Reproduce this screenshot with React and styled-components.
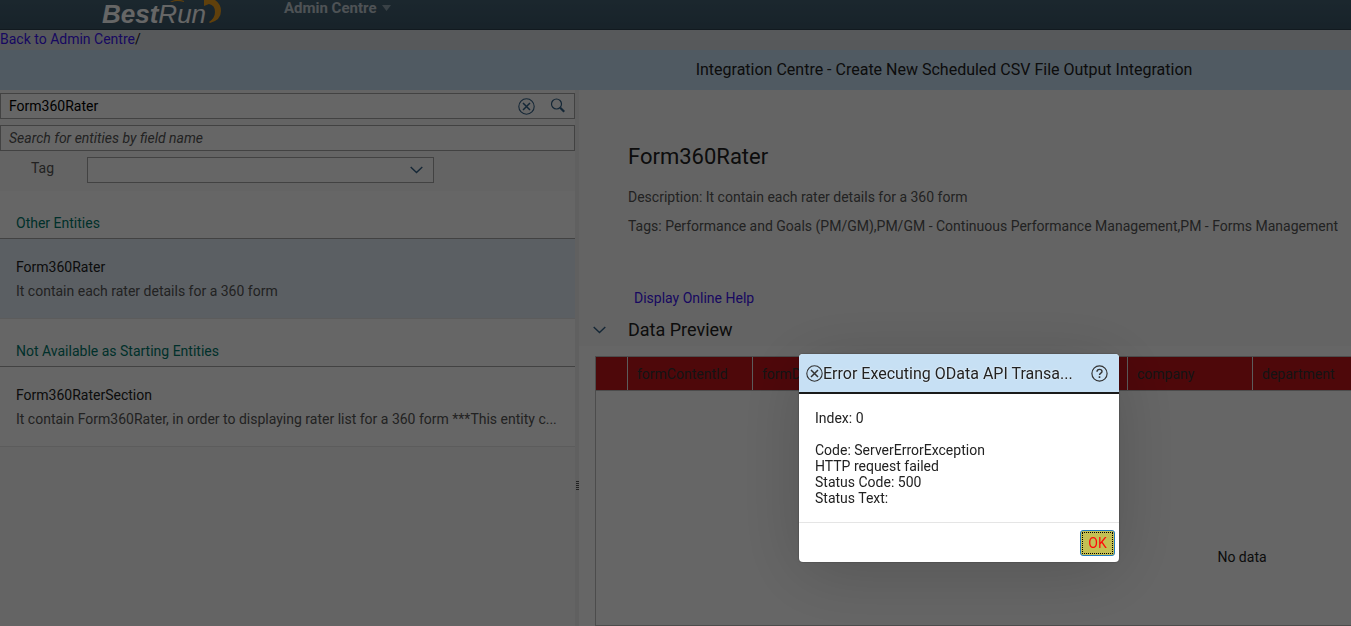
import React from 'react';
import styled, { createGlobalStyle } from 'styled-components';

const GlobalStyle = createGlobalStyle`
  * {
    box-sizing: border-box;
  }
  body {
    margin: 0;
    overflow: hidden;
    font-family: Roboto, "Liberation Sans", sans-serif;
    font-size: 14px;
    line-height: 16px;
    color: #222;
  }
  h1, h2, h3, p, ul {
    margin: 0;
    padding: 0;
    font-size: 14px;
    font-weight: normal;
  }
  a {
    color: #3c14f0;
    text-decoration: none;
  }
  button, input, select {
    font: inherit;
  }
`;

const Viewport = styled.div`
  height: 100vh;
  overflow: hidden;
`;

const Page = styled.div`
  display: flex;
  flex-direction: column;
  min-width: 118rem;
  height: 100%;
  background-color: #fff;
`;

const TopBar = styled.header`
  display: flex;
  align-items: center;
  height: 30px;
  padding-left: 102px;
  gap: 62px;
  background: linear-gradient(#456274, #3c5768);
  border-bottom: 1px solid #2d4250;
  overflow: hidden;
`;

const Logo = styled.div`
  display: flex;
  align-items: flex-start;
  width: 120px;
  height: 30px;
  position: relative;
  font-family: "Liberation Sans", Arial, sans-serif;
  font-size: 26px;
  font-style: italic;
  line-height: 28px;
  color: #fff;
  svg {
    position: absolute;
    top: 0;
    left: 0;
  }
`;

const MenuButton = styled.button`
  display: flex;
  align-items: center;
  gap: 6px;
  height: 16px;
  margin-bottom: 14px;
  padding: 0;
  border: none;
  background: none;
  color: #c3ced5;
  font-size: 15px;
  font-weight: bold;
`;

const Breadcrumb = styled.nav`
  height: 20px;
  line-height: 18px;
  background-color: #d9dfe3;
`;

const TitleBar = styled.h1`
  height: 40px;
  line-height: 40px;
  font-size: 16px;
  text-align: center;
  background-color: #c7e0f4;
`;

const Content = styled.main`
  display: flex;
  flex: 1;
  min-height: 0;
`;

const Sidebar = styled.section`
  flex: 0 0 575px;
  background-color: #fafafa;
`;

const Splitter = styled.div`
  display: flex;
  align-items: flex-start;
  justify-content: flex-end;
  width: 4px;
  padding-top: 391px;
  background-color: #efefef;
`;

const Filters = styled.form`
  display: flex;
  flex-direction: column;
  gap: 6px;
  height: 101px;
  padding-top: 3px;
`;

const Field = styled.div`
  display: flex;
  align-items: center;
  height: 26px;
  padding: 0 8px;
  gap: 15px;
  border: 1px solid #a6a6a6;
  background-color: #fff;
`;

const TextInput = styled.input`
  flex: 1;
  min-width: 0;
  padding: 0;
  border: none;
  outline: none;
  background: none;
  color: #000;
  &::placeholder {
    color: #555;
    font-style: italic;
    opacity: 1;
  }
`;

const IconButton = styled.button`
  display: flex;
  padding: 0;
  border: none;
  background: none;
  color: ${props => props.$color || '#346187'};
`;

const TagRow = styled.div`
  display: flex;
  align-items: center;
  padding-left: 31px;
  color: #555;
  label {
    width: 56px;
    padding-bottom: 4px;
  }
`;

const SelectBox = styled.div`
  display: grid;
  width: 347px;
  color: #346187;
  > * {
    grid-area: 1 / 1;
  }
  svg {
    align-self: center;
    justify-self: end;
    margin-right: 11px;
    pointer-events: none;
  }
`;

const Select = styled.select`
  appearance: none;
  height: 26px;
  border: 1px solid #a6a6a6;
  border-radius: 0;
  background-color: #fff;
`;

const GroupHeader = styled.h2`
  height: 48px;
  padding: 24px 16px 0;
  border-bottom: 1px solid #a6a6a6;
  background-color: #fff;
  color: #00796b;
`;

const Entity = styled.li`
  display: flex;
  flex-direction: column;
  gap: 8px;
  height: 80px;
  padding: 20px 16px 0;
  list-style: none;
  border-bottom: 1px solid #e5e5e5;
  background-color: ${props => (props.$selected ? '#e3edf8' : '#fff')};
`;

const Muted = styled.p`
  color: #555;
  white-space: nowrap;
`;

const Detail = styled.section`
  display: flex;
  flex-direction: column;
  flex: 1;
  min-width: 0;
`;

const DetailHeader = styled.div`
  flex: 0 0 256px;
  padding: 54px 49px 0;
  background-color: #fafafa;
`;

const DetailTitle = styled.h2`
  margin-bottom: 19px;
  font-size: 22px;
  line-height: 26px;
`;

const DetailText = styled(Muted)`
  height: 29px;
`;

const HelpLink = styled.a`
  display: block;
  margin: 43px 6px 0;
`;

const PreviewTitle = styled.div`
  display: flex;
  align-items: center;
  gap: 22px;
  margin: 12px 0 0 -35px;
  h3 {
    font-size: 18px;
    line-height: 24px;
  }
`;

const Chevron = styled.svg`
  width: 13px;
  height: 8px;
  fill: none;
  stroke: #346187;
  stroke-width: 1.4;
`;

const Preview = styled.div`
  flex: 1;
  min-height: 0;
  margin: 10px 0 0 16px;
  border: 1px solid #bfbfbf;
  border-right: none;
  overflow: hidden;
`;

const Table = styled.table`
  width: 100%;
  table-layout: fixed;
  border-collapse: separate;
  border-spacing: 0;
  th {
    width: 125px;
    height: 33px;
    padding: 0 9px;
    border-right: 1px solid #e5e5e5;
    background-color: #c4141b;
    color: #333;
    font-weight: normal;
    text-align: left;
  }
  th:first-child {
    width: 32px;
  }
  th:last-child {
    width: auto;
    border-right: none;
  }
  td {
    height: 332px;
    padding: 0;
    border-top: 1px solid #bfbfbf;
    text-align: center;
  }
`;

const Overlay = styled.div`
  position: fixed;
  inset: 0;
  background-color: rgba(0, 0, 0, 0.6);
`;

const Dialog = styled.section`
  position: fixed;
  top: 354px;
  left: 799px;
  width: 320px;
  border-radius: 4px;
  overflow: hidden;
  background-color: #fff;
  box-shadow: 0 0 2px rgba(0, 0, 0, 0.4), 0 10px 70px rgba(0, 0, 0, 0.18);
`;

const DialogHeader = styled.header`
  display: flex;
  align-items: center;
  height: 40px;
  padding: 1px 11px 0 7px;
  border-bottom: 2px solid #1a1a1a;
  background-color: #c7e0f4;
  h2 {
    flex: 1;
    font-size: 16px;
    line-height: 20px;
    white-space: nowrap;
    text-shadow: 0 0 2px #fff;
  }
`;

const DialogBody = styled.p`
  padding: 16px;
  white-space: pre-line;
`;

const DialogFooter = styled.footer`
  display: flex;
  justify-content: flex-end;
  height: 40px;
  padding: 7px 4px;
  border-top: 1px solid #e5e5e5;
`;

const OkButton = styled.button`
  width: 35px;
  height: 26px;
  padding: 0;
  border: 1px solid #1f7cc0;
  border-radius: 3px;
  outline: 1px dotted #000;
  outline-offset: -3px;
  background-color: #c4c053;
  color: #ff0a0a;
`;

const ClearIcon = () => (
  <svg width="17" height="17" viewBox="0 0 17 17" fill="none" stroke="currentColor">
    <circle cx="8.5" cy="8.5" r="7.7" strokeWidth="1.1" />
    <path d="M5 5l7 7M12 5l-7 7" strokeWidth="1.5" />
  </svg>
);

const SearchIcon = () => (
  <svg width="16" height="16" viewBox="0 0 16 16" fill="none" stroke="currentColor">
    <circle cx="6.500" cy="6" r="5" strokeWidth="1.2" />
    <path d="M10.2 9.700l4 4" strokeWidth="2.2" />
  </svg>
);

const HelpIcon = () => (
  <svg width="17" height="17" viewBox="0 0 17 17" fill="none" stroke="currentColor">
    <circle cx="8.5" cy="8.5" r="7.6" strokeWidth="1.2" />
    <path d="M6 6.7c0-1.5 1-2.3 2.5-2.3s2.5.8 2.5 2.1c0 1.7-2.5 1.7-2.5 3.6" strokeWidth="1.4" />
    <path d="M8.5 11.3v1.6" strokeWidth="1.6" />
  </svg>
);

const ArrowDown = () => (
  <Chevron viewBox="0 0 13 8" aria-hidden="true">
    <path d="M.7 1l5.8 5.6L12.3 1" />
  </Chevron>
);

const GripIcon = () => (
  <svg width="3" height="10" viewBox="0 0 3 10" stroke="#555">
    <path d="M0 .5h3M0 2.5h3M0 4.5h3M0 6.5h3M0 8.5h3" />
  </svg>
);

const groups = [
  {
    title: 'Other Entities',
    entities: [
      { name: 'Form360Rater', text: 'It contain each rater details for a 360 form', selected: true },
    ],
  },
  {
    title: 'Not Available as Starting Entities',
    entities: [
      {
        name: 'Form360RaterSection',
        text: 'It contain Form360Rater, in order to displaying rater list for a 360 form ***This entity c...',
      },
    ],
  },
];

const columns = ['', 'formContentId', 'formDataId', '', '', 'company', 'department'];

const errorText = `Index: 0

Code: ServerErrorException
HTTP request failed
Status Code: 500
Status Text:`;

const EntitySearch = () => (
  <Filters>
    <Field>
      <TextInput aria-label="Entity name" defaultValue="Form360Rater" />
      <IconButton type="button" aria-label="Clear"><ClearIcon /></IconButton>
      <IconButton type="button" aria-label="Search"><SearchIcon /></IconButton>
    </Field>
    <Field>
      <TextInput aria-label="Field name" placeholder="Search for entities by field name" />
    </Field>
    <TagRow>
      <label htmlFor="tag">Tag</label>
      <SelectBox>
        <Select id="tag" />
        <ArrowDown />
      </SelectBox>
    </TagRow>
  </Filters>
);

const ErrorDialog = () => (
  <Dialog role="dialog" aria-labelledby="error-title">
    <DialogHeader>
      <IconButton type="button" aria-label="Close" $color="#333"><ClearIcon /></IconButton>
      <h2 id="error-title">Error Executing OData API Transa...</h2>
      <IconButton type="button" aria-label="Help" $color="#333"><HelpIcon /></IconButton>
    </DialogHeader>
    <DialogBody>{errorText}</DialogBody>
    <DialogFooter>
      <OkButton type="button">OK</OkButton>
    </DialogFooter>
  </Dialog>
);

const App = () => (
  <Viewport>
    <GlobalStyle />
    <Page>
      <TopBar>
        <Logo>
          <b>Best</b>
          <span>Run</span>
          <svg width="120" height="30" viewBox="0 0 120 30" fill="#f0a01e" aria-hidden="true">
            <path d="M68 2q7-4 14-1l0 1q-7-2-12 0z" />
            <path d="M102 0h11q6 4 6 11 0 9-11 12l-1-1q6-4 6-10 0-7-6-8l-5 2z" />
          </svg>
        </Logo>
        <MenuButton type="button">
          Admin Centre
          <svg width="9" height="6" viewBox="0 0 9 6" fill="#8fa3b0"><path d="M0 0h9L4.500 6z" /></svg>
        </MenuButton>
      </TopBar>
      <Breadcrumb><a href="#admin">Back to Admin Centre</a>/</Breadcrumb>
      <TitleBar>Integration Centre - Create New Scheduled CSV File Output Integration</TitleBar>
      <Content>
        <Sidebar>
          <EntitySearch />
          {
            groups.map(group => (
              <div key={group.title}>
                <GroupHeader>{group.title}</GroupHeader>
                <ul>
                  {group.entities.map(entity => (
                    <Entity key={entity.name} $selected={entity.selected}>
                      <h3>{entity.name}</h3>
                      <Muted>{entity.text}</Muted>
                    </Entity>
                  ))}
                </ul>
              </div>
            ))
          }
        </Sidebar>
        <Splitter><GripIcon /></Splitter>
        <Detail>
          <DetailHeader>
            <DetailTitle>Form360Rater</DetailTitle>
            <DetailText>Description: It contain each rater details for a 360 form</DetailText>
            <DetailText>
              Tags: Performance and Goals (PM/GM),PM/GM - Continuous Performance Management,PM - Forms Management
            </DetailText>
            <HelpLink href="#help">Display Online Help</HelpLink>
            <PreviewTitle>
              <ArrowDown />
              <h3>Data Preview</h3>
            </PreviewTitle>
          </DetailHeader>
          <Preview>
            <Table>
              <thead>
                <tr>
                  {columns.map((name, i) => <th key={i}>{name}</th>)}
                </tr>
              </thead>
              <tbody>
                <tr><td colSpan={columns.length}>No data</td></tr>
              </tbody>
            </Table>
          </Preview>
        </Detail>
      </Content>
    </Page>
    <Overlay />
    <ErrorDialog />
  </Viewport>
);

export default App;
